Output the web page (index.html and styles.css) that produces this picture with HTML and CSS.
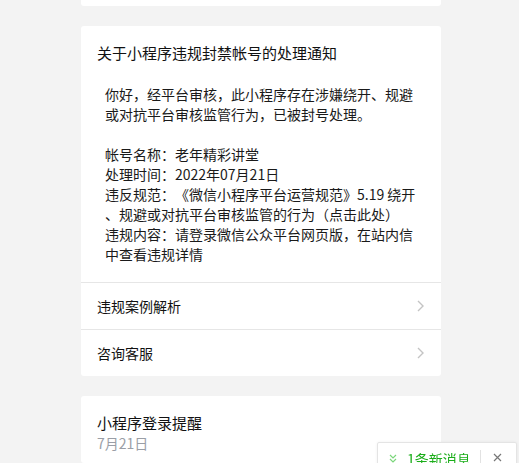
FILE: index.html
```html
<!DOCTYPE html>
<html lang="zh-CN">
<head>
<meta charset="utf-8">
<title>消息</title>
<link rel="stylesheet" href="styles.css">
</head>
<body>
<div class="feed">
  <div class="card card-stub"></div>

  <div class="card">
    <div class="card-head">
      <h2 class="card-title">关于小程序违规封禁帐号的处理通知</h2>
      <div class="card-body">
        <p>你好，经平台审核，此小程序存在涉嫌绕开、规避或对抗平台审核监管行为，已被封号处理。</p>
        <p class="gap">帐号名称：老年精彩讲堂<br>处理时间：2022年07月21日<br>违反规范：《微信小程序平台运营规范》5.19 绕开、规避或对抗平台审核监管的行为（点击此处）<br>违规内容：请登录微信公众平台网页版，在站内信中查看违规详情</p>
      </div>
    </div>
    <a class="row">
      <span>违规案例解析</span>
      <svg class="chev" width="7" height="12" viewBox="0 0 7 12"><polyline points="1,1 6,6 1,11" fill="none" stroke="#c4c4c4" stroke-width="1.4"/></svg>
    </a>
    <a class="row">
      <span>咨询客服</span>
      <svg class="chev" width="7" height="12" viewBox="0 0 7 12"><polyline points="1,1 6,6 1,11" fill="none" stroke="#c4c4c4" stroke-width="1.4"/></svg>
    </a>
  </div>

  <div class="card">
    <div class="card-head short">
      <h2 class="card-title">小程序登录提醒</h2>
      <div class="date">7月21日</div>
    </div>
  </div>
</div>

<div class="toast">
  <svg class="toast-icon" width="8" height="10" viewBox="0 0 8 10"><polyline points="1,1 4,4 7,1" fill="none" stroke="#7bd67b" stroke-width="1.2"/><polyline points="1,5 4,8 7,5" fill="none" stroke="#7bd67b" stroke-width="1.2"/></svg>
  <span class="toast-text">1条新消息</span>
  <span class="toast-sep"></span>
  <svg class="toast-close" width="9" height="9" viewBox="0 0 9 9"><path d="M1 1 L8 8 M8 1 L1 8" stroke="#777" stroke-width="1.2" fill="none"/></svg>
</div>
</body>
</html>
```

FILE: styles.css
```css
html, body {
  margin: 0;
  padding: 0;
}
body {
  background: #f3f3f3;
  font-family: "Noto Sans CJK SC", "Microsoft YaHei", sans-serif;
  color: #222;
  height: 463px;
  overflow: hidden;
  text-spacing-trim: space-all;
}
.feed {
  width: 360px;
  margin-left: 81px;
  display: flex;
  flex-direction: column;
  gap: 20px;
}
.card {
  background: #fff;
  border-radius: 3px;
}
.card-stub {
  height: 6px;
  border-radius: 0 0 3px 3px;
}
.card-head {
  padding: 16px 24px 18px 16px;
}
.card-head.short {
  padding-bottom: 11px;
}
.card-title {
  margin: 0;
  font-size: 15px;
  font-weight: normal;
  line-height: 22px;
  color: #111;
}
.card-body {
  margin-top: 20px;
  padding-left: 8px;
  font-size: 14px;
  line-height: 20px;
  line-break: anywhere;
  color: #1a1a1a;
}
.card-body p {
  margin: 0;
}
.card-body p.gap {
  margin-top: 20px;
}
.row {
  display: flex;
  align-items: center;
  justify-content: space-between;
  height: 46px;
  padding: 0 17px 0 16px;
  border-top: 1px solid #e6e6e6;
  font-size: 14px;
  color: #111;
}
.chev {
  display: block;
}
.date {
  font-size: 14px;
  line-height: 18px;
  color: #9a9ea6;
}
.toast {
  position: fixed;
  left: 377px;
  top: 442px;
  width: 140px;
  height: 34px;
  box-sizing: border-box;
  background: #fff;
  border: 1px solid #e4e4e4;
  border-radius: 2px;
  box-shadow: 0 0 3px rgba(0, 0, 0, 0.06);
  display: flex;
  align-items: flex-start;
  padding-top: 6px;
}
.toast-icon {
  margin: 5px 0 0 11px;
  display: block;
  flex: none;
}
.toast-text {
  width: 64px;
  margin-left: 10px;
  font-size: 14px;
  line-height: 20px;
  white-space: nowrap;
  color: #1aad19;
}
.toast-sep {
  width: 1px;
  height: 24px;
  margin: 1px 0 0 9px;
  background: #e2e2e2;
  flex: none;
}
.toast-close {
  display: block;
  margin: 4px 0 0 12px;
  flex: none;
}
```
